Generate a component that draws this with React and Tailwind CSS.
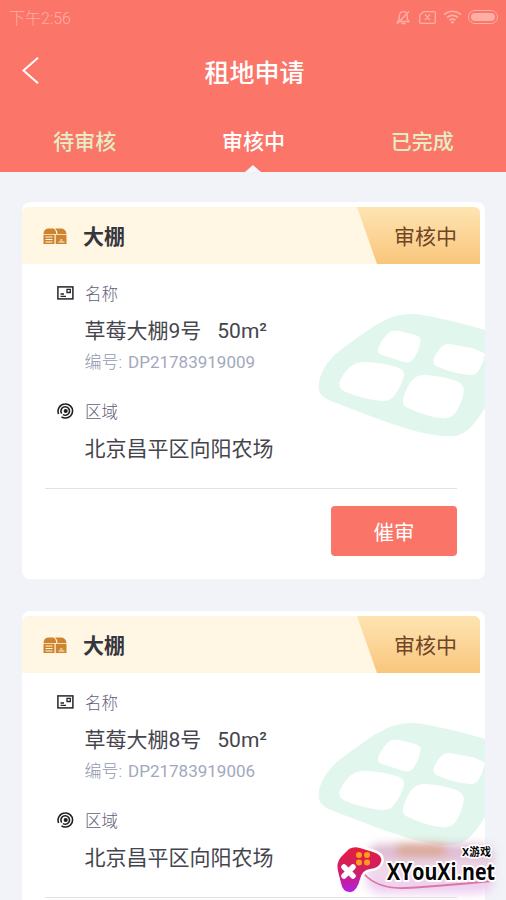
import React, { useState } from 'react'

const tabs = ['待审核', '审核中', '已完成']

const applications = [
  { id: 1, type: '大棚', status: '审核中', name: '草莓大棚9号', size: '50m²', code: 'DP21783919009', area: '北京昌平区向阳农场' },
  { id: 2, type: '大棚', status: '审核中', name: '草莓大棚8号', size: '50m²', code: 'DP21783919006', area: '北京昌平区向阳农场' },
]

const StatusBar = () => (
  <div className="flex h-[34px] items-center justify-between pr-[8px] pl-[9px] text-[#ffaea5]">
    <span className="pt-[3px] text-[16px] leading-[31px] font-light">下午2:56</span>
    <div className="flex items-center">
      {/* Muted bell */}
      <svg className="mr-[8px] h-[15px] w-[16px]" viewBox="0 0 16 15" fill="none" stroke="currentColor" strokeWidth="1.3">
        <path d="M2.500 11.500h11.500L12.300 9V5.500C12 3 10.500 1.700 8.300 1.700S4.800 3 4.300 5.500V9zM6.500 13.500h4M2 14L14 1.500" />
      </svg>
      {/* No SIM */}
      <svg className="mr-[7px] h-[13px] w-[17px]" viewBox="0 0 17 13" fill="none" stroke="currentColor" strokeWidth="1.3">
        <path d="M4.500.7H15q1.300 0 1.300 1.300v9q0 1.300-1.300 1.300H2Q.7 12.300.7 11V4.200zM6 3.500l5 5.500M11 3.500L6 9" />
      </svg>
      {/* Wifi */}
      <svg className="mr-[6px] h-[14px] w-[19px]" viewBox="0 0 19 14" fill="none" stroke="currentColor" strokeWidth="1.700">
        <path d="M1 4.500q8.500-6.500 17 0M3.800 7.600q5.700-4.400 11.400 0M6.500 10.300q3-2.200 6 0" />
        <circle cx="9.500" cy="12.300" r="1.300" fill="currentColor" stroke="none" />
      </svg>
      {/* Battery */}
      <div className="h-[14px] w-[30px] rounded-full border border-[#ffaea5] p-[2px]">
        <div className="h-full w-full rounded-full bg-[#ffaea5]" />
      </div>
    </div>
  </div>
)

const ShedIcon = () => (
  <svg className="h-[16px] w-[24px]" viewBox="0 0 24 16" fill="#d0832f">
    <path d="M.5 6Q.8.700 5 .5h5.500Q13 1.800 13.300 6zM12 .5h6.500q4.500.5 5 5.500h-9Q14.300 2 12 .5z" />
    <path fillRule="evenodd" d="M.5 6.700h11V16H.5zM2.500 8.500v1h7v-1zM2.500 11v1h7v-1zM2.500 13.500v1h7v-1z" />
    <path fillRule="evenodd" d="M12.700 6.700h10.800V16H12.700zM15.500 13.500v1h6v-1zM17 11.500v1h2.500v-1z" />
  </svg>
)

const NameIcon = () => (
  <svg className="h-[14px] w-[17px]" viewBox="0 0 17 14" fill="none" stroke="#25252d" strokeWidth="1.500">
    <rect x=".9" y=".9" width="15" height="12" />
    <path d="M10 3.300h3.300v3.200H10zM3.500 8h3.500M3.500 10.300h5.500" strokeWidth="1.300" />
  </svg>
)

const AreaIcon = () => (
  <svg className="h-[16px] w-[17px]" viewBox="0 0 17 16" fill="none" stroke="#1d1d22" strokeWidth="1.600">
    <path d="M1.600 11A7.200 7.200 0 0 1 8 1A7 7 0 0 1 15.600 8A7 7 0 0 1 8.500 15Q6 15 4.500 13.800" />
    <path d="M4.700 10.500A4.300 4.300 0 1 1 8.700 12.300Q7 12.300 6 11.500" />
    <circle cx="8.700" cy="8" r="1.300" fill="#1d1d22" />
  </svg>
)

const Greenhouse = () => (
  <svg className="absolute top-[111px] right-0 h-[124px] w-[167px]" viewBox="54 354 501 372">
    <path
      fill="#e1f6ec"
      d="M56 572C58 530 90 485 138 453C185 420 225 385 278 366C318 353 352 355 390 364C450 377 510 392 555 405V638C535 670 515 700 487 716C460 728 415 724 370 714C300 699 190 656 95 619C65 606 56 594 56 572Z"
    />
    <g fill="#fff">
      <path d="M262 418Q275 403 298 408L348 421Q366 428 361 442Q355 475 338 494Q328 506 311 501L245 480Q230 475 235 459Q244 435 262 418Z" />
      <path d="M421 459Q433 444 454 448L515 459Q540 466 555 477Q551 500 537 526Q529 541 509 540Q460 535 412 515Q397 508 401 492Q408 473 421 459Z" />
      <path d="M146 519Q165 501 193 501Q245 502 296 518Q314 525 312 543Q304 575 282 603Q270 619 245 618Q185 612 130 588Q113 580 120 557Q130 535 146 519Z" />
      <path d="M334 558Q350 538 376 540Q425 542 472 559Q493 569 491 592Q485 627 467 653Q453 672 426 670Q375 663 322 638Q303 629 311 605Q320 577 334 558Z" />
    </g>
  </svg>
)

const ApplicationCard = ({ item }) => (
  <div className="relative h-[377px] overflow-hidden rounded-[8px] bg-white pt-[5px]">
    <Greenhouse />

    {/* Card header */}
    <div className="mr-[5px] flex h-[57px] items-center rounded-t-[6px] bg-[#fff7e3] pl-[21px]">
      <ShedIcon />
      <h2 className="ml-[16px] flex-1 pt-[4px] text-[21px] font-bold text-[#36363e]">{item.type}</h2>
      <div className="flex h-full w-[123px] items-center rounded-tr-[6px] bg-gradient-to-b from-[#fee4b2] to-[#f9c67b] pt-[4px] pl-[37px] text-[21px] text-[#704526] [clip-path:polygon(0_0,100%_0,100%_100%,20px_100%)]">
        {item.status}
      </div>
    </div>

    {/* Details */}
    <div className="relative pt-[16px] pl-[35px]">
      <div className="flex h-[26px] items-center text-[16.5px] font-light text-[#5f617c]">
        <span className="w-[28px]"><NameIcon /></span>
        <span className="pt-[4px]">名称</span>
      </div>
      <div className="pl-[27.5px]">
        <p className="mt-[11px] flex h-[30px] items-center gap-[16px] text-[21px] text-[#45454d]">
          <span>{item.name}</span>
          <span>{item.size}</span>
        </p>
        <p className="mt-[4px] flex h-[24px] items-center text-[17px] font-light text-[#9298b0]">
          <span className="mr-[6px]">编号:</span>
          <span className="font-normal text-[#a2a8bc]">{item.code}</span>
        </p>
      </div>
      <div className="mt-[23px] flex h-[26px] items-center text-[16.5px] font-light text-[#5f617c]">
        <span className="w-[28px]"><AreaIcon /></span>
        <span className="pt-[4px]">区域</span>
      </div>
      <p className="mt-[11px] flex h-[30px] items-center pl-[27.5px] text-[21px] text-[#45454d]">{item.area}</p>
    </div>

    {/* Action */}
    <div className="mt-[23px] mr-[28px] ml-[23px] flex justify-end border-t border-[#e2e2e5] pt-[17px]">
      <button className="h-[50px] w-[126px] rounded-[4px] bg-[#fa7567] pt-[4px] text-[20.5px] text-white">催审</button>
    </div>
  </div>
)

const Watermark = () => (
  <div className="absolute right-0 bottom-0 h-[60px] w-[180px]">
    <div className="absolute top-[5px] left-[40px] h-[48px] w-[128px] rounded-[14px] bg-gradient-to-b from-[#c997bd] via-[#f0d5e6] to-[#e7b9ef] opacity-80 blur-[5px]" />
    <div className="absolute top-[5px] left-[70px] h-[10px] w-[50px] rounded-full bg-[#d99b69] opacity-70 blur-[5px]" />
    <svg className="absolute top-[5px] left-[8px] h-[50px] w-[170px]" viewBox="0 0 170 50" fill="none">
      <defs>
        <linearGradient id="pad" x1="0" y1="0" x2="0" y2="1">
          <stop offset="0" stopColor="#e51c3e" />
          <stop offset=".55" stopColor="#cf1f68" />
          <stop offset="1" stopColor="#b51ee5" />
        </linearGradient>
      </defs>
      <path d="M30 29Q44 44 70 43T158 36" stroke="#db78a0" strokeWidth="1.800" />
      <path
        d="M15 4Q20 1 26 3L39 7Q49 10 47 17Q45 23 36 24Q28 25 26 34Q23 46 17 47Q9 48 7 38L4 26Q2 18 7 12Z"
        fill="url(#pad)"
        stroke="#fff"
        strokeWidth="5"
        strokeLinejoin="round"
        paintOrder="stroke"
      />
      <g fill="#ff9f17">
        <circle cx="25" cy="10" r="3" />
        <circle cx="33" cy="10" r="3" />
        <circle cx="25" cy="17.500" r="3" />
        <circle cx="33" cy="17.500" r="3" />
      </g>
      <path d="M10 22l9 9M19 22l-9 9" stroke="#fff" strokeWidth="5.500" strokeLinecap="round" />
    </svg>
    <svg className="absolute inset-0 h-[60px] w-[180px] overflow-visible" viewBox="0 0 180 60">
      <g fill="#050505" stroke="#fff" strokeLinejoin="round" paintOrder="stroke" fontWeight="700">
        <text x="136" y="16" fontSize="11" strokeWidth="3" textLength="29" fontFamily="Noto Sans, Noto Sans CJK SC, sans-serif">X游戏</text>
        <text x="61" y="40" fontSize="24" strokeWidth="4" textLength="108" lengthAdjust="spacingAndGlyphs" fontFamily="Open Sans, Noto Sans, sans-serif">XYouXi.net</text>
      </g>
    </svg>
  </div>
)

const App = () => {
  const [active, setActive] = useState(1)

  return (
    <div className="relative h-[900px] w-[506px] overflow-hidden bg-[#f1f3f8] font-[Roboto,'Noto_Sans_CJK_SC',sans-serif]">
      <header className="h-[172px] bg-[#fb7569] text-white">
        <StatusBar />
        {/* Title bar */}
        <div className="grid h-[76px] grid-cols-[60px_1fr_60px] items-center">
          <button className="pb-[3px] pl-[21px]" aria-label="返回">
            <svg className="h-[27px] w-[18px]" viewBox="0 0 18 27" fill="none" stroke="#fff" strokeWidth="2">
              <path d="M17 .8L2.500 13.500L17 26.200" />
            </svg>
          </button>
          <h1 className="pt-[3px] pl-[3px] text-center text-[25px] leading-[36px] font-medium">租地申请</h1>
        </div>
        <nav className="grid h-[62px] grid-cols-3">
          {tabs.map((tab, i) => (
            <button
              key={tab}
              onClick={() => setActive(i)}
              className={`relative pt-[3px] pl-[1px] text-[21px] font-medium ${i === active ? 'text-white' : 'text-[#e4edc4]'}`}
            >
              {tab}
              {i === active && (
                <span className="absolute bottom-0 left-1/2 h-[7px] w-[16px] -translate-x-1/2 bg-[#f5f7fb] [clip-path:polygon(50%_0,100%_100%,0_100%)]" />
              )}
            </button>
          ))}
        </nav>
      </header>

      <main className="flex flex-col gap-[32px] pt-[30px] pr-[21px] pl-[22px]">
        {applications.map((item) => (
          <ApplicationCard key={item.id} item={item} />
        ))}
      </main>

      <Watermark />
    </div>
  )
}

export default App
